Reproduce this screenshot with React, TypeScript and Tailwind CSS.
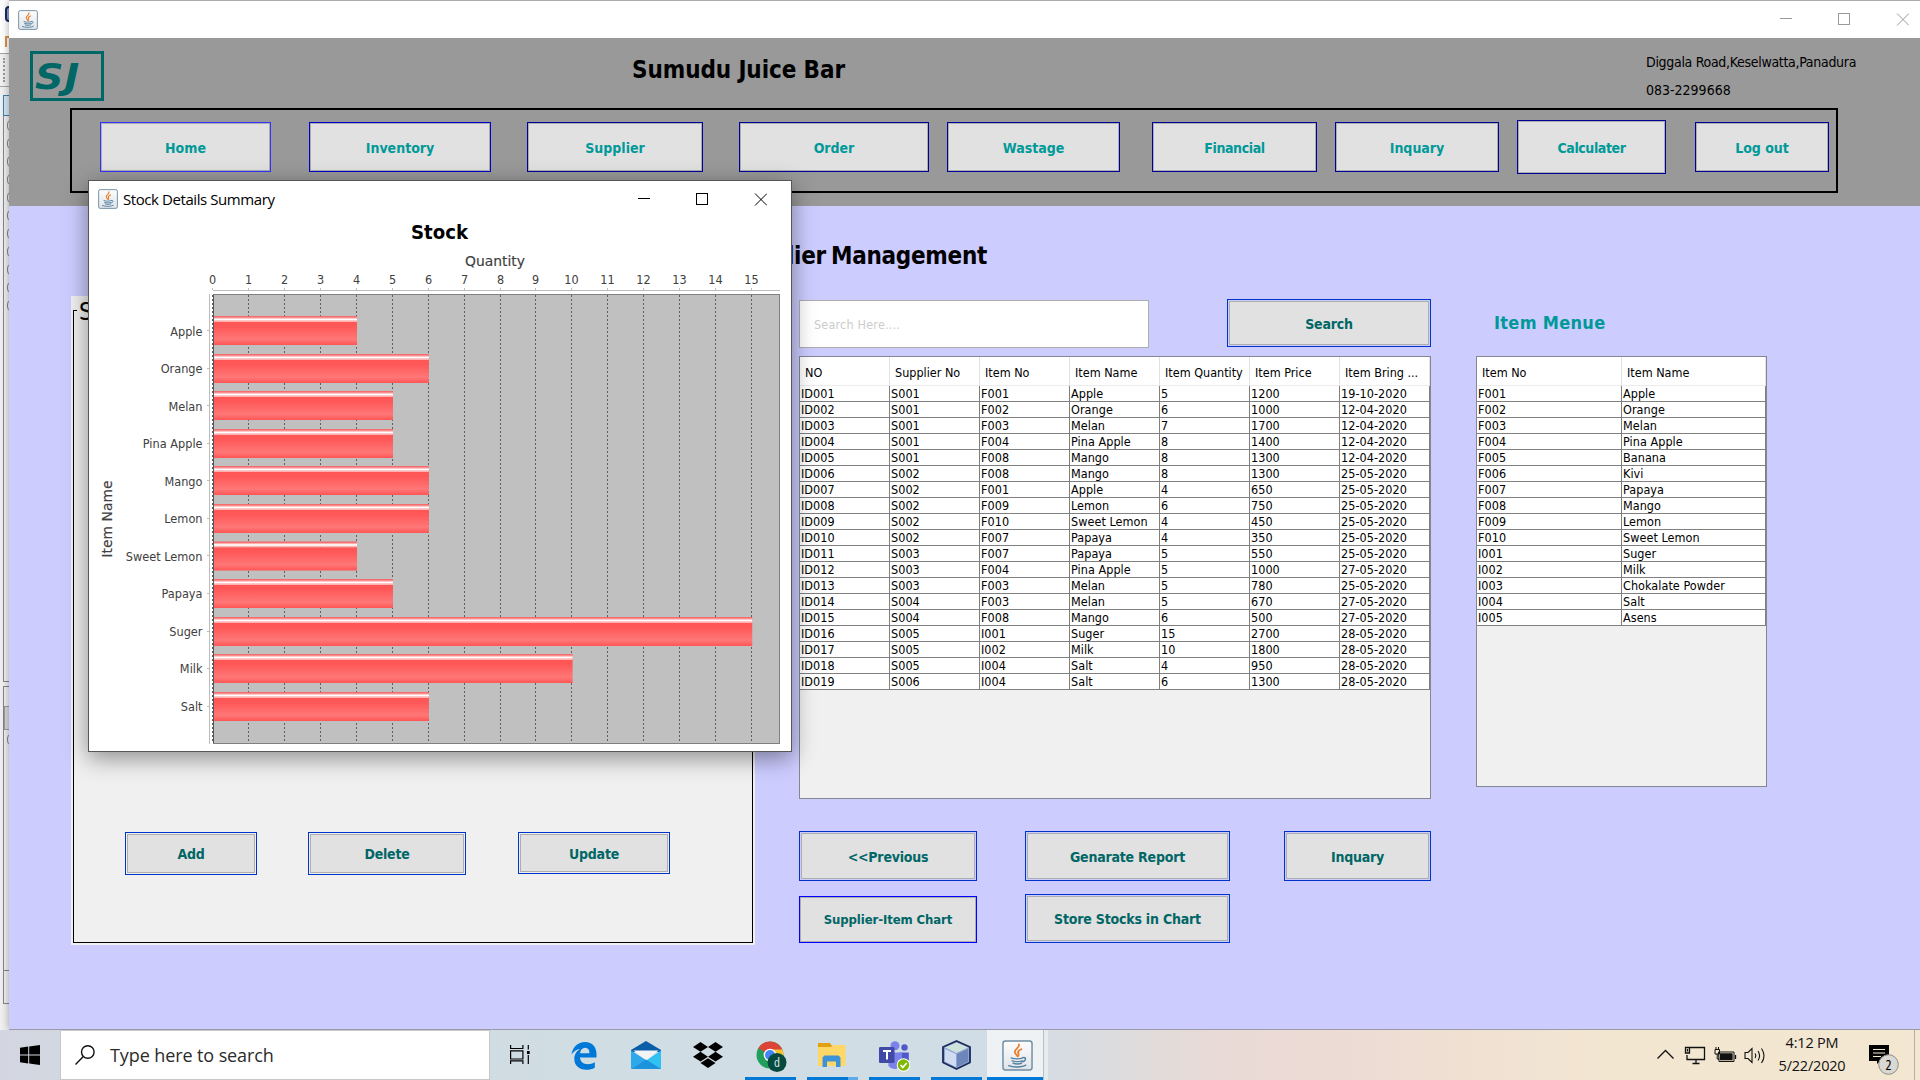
import React from "react";

const TAHOMA = "font-['DejaVu_Sans_Condensed','DejaVu_Sans',sans-serif] [font-stretch:condensed]";
const SEGOE = "font-['Open_Sans','Noto_Sans',sans-serif] [font-stretch:normal]";

function JavaIcon({ className }: { className: string }) {
  return (
    <svg viewBox="0 0 32 32" className={className}>
      <defs>
        <linearGradient id="javaBg" x1="0" y1="0" x2="0" y2="1">
          <stop offset="0" stopColor="#fdfdfd" />
          <stop offset="1" stopColor="#dfe3e8" />
        </linearGradient>
      </defs>
      <rect x="1" y="1" width="30" height="30" rx="2.5" fill="url(#javaBg)" stroke="#6f8da3" strokeWidth="1.5" />
      <path d="M17.5 4.5c1.2 3-4.300 4.600-4.300 7.600 0 2 1.800 3 2.800 4.700M20 9.500c-2.800 1.200-4 2.600-3.200 4.200.8 1.400.4 2.200-.5 3.200" fill="none" stroke="#ec7a26" strokeWidth="1.800" strokeLinecap="round" />
      <path d="M9.500 18.500c3 1.300 9 1.300 12 0M10.500 21.500c3 1 8 1 10 0M11.500 24c2.500.8 6.500.8 8.500 0M21.500 18.200c3.500-.8 4 2.800-.5 4.300M7 26.500c4 1.800 14 1.800 17.500-.5" fill="none" stroke="#5382a1" strokeWidth="1.500" strokeLinecap="round" />
    </svg>
  );
}

function WindowControls({ className }: { className: string }) {
  return (
    <svg viewBox="0 0 129 13" className={className} fill="none" stroke="currentColor" shapeRendering="crispEdges">
      <path d="M0 5.500h12" />
      <rect x="58.500" y="0.500" width="11" height="11" />
      <path d="M117 0.500l12 12M129 0.500l-12 12" shapeRendering="auto" />
    </svg>
  );
}

function NavButton({ label, className }: { label: string; className: string }) {
  return (
    <button className={`shrink-0 border ${className}`}>
      <span className="flex h-full items-center justify-center border border-[#adadad] bg-[#e1e1e1] pt-[2px] text-[14px] font-bold whitespace-nowrap text-[#009999]">
        {label}
      </span>
    </button>
  );
}

function ActionButton({ label, className, textClass = "pt-[2px] text-[14px] tracking-[-0.2px]" }: { label: string; className: string; textClass?: string }) {
  return (
    <button className={`shrink-0 border ${className}`}>
      <span className={`flex h-full items-center justify-center border border-[#adadad] bg-[#e1e1e1] font-bold whitespace-nowrap text-[#006666] ${textClass}`}>
        {label}
      </span>
    </button>
  );
}

const stock = [
  ["ID001", "S001", "F001", "Apple", "5", "1200", "19-10-2020"],
  ["ID002", "S001", "F002", "Orange", "6", "1000", "12-04-2020"],
  ["ID003", "S001", "F003", "Melan", "7", "1700", "12-04-2020"],
  ["ID004", "S001", "F004", "Pina Apple", "8", "1400", "12-04-2020"],
  ["ID005", "S001", "F008", "Mango", "8", "1300", "12-04-2020"],
  ["ID006", "S002", "F008", "Mango", "8", "1300", "25-05-2020"],
  ["ID007", "S002", "F001", "Apple", "4", "650", "25-05-2020"],
  ["ID008", "S002", "F009", "Lemon", "6", "750", "25-05-2020"],
  ["ID009", "S002", "F010", "Sweet Lemon", "4", "450", "25-05-2020"],
  ["ID010", "S002", "F007", "Papaya", "4", "350", "25-05-2020"],
  ["ID011", "S003", "F007", "Papaya", "5", "550", "25-05-2020"],
  ["ID012", "S003", "F004", "Pina Apple", "5", "1000", "27-05-2020"],
  ["ID013", "S003", "F003", "Melan", "5", "780", "25-05-2020"],
  ["ID014", "S004", "F003", "Melan", "5", "670", "27-05-2020"],
  ["ID015", "S004", "F008", "Mango", "6", "500", "27-05-2020"],
  ["ID016", "S005", "I001", "Suger", "15", "2700", "28-05-2020"],
  ["ID017", "S005", "I002", "Milk", "10", "1800", "28-05-2020"],
  ["ID018", "S005", "I004", "Salt", "4", "950", "28-05-2020"],
  ["ID019", "S006", "I004", "Salt", "6", "1300", "28-05-2020"],
];

const menu = [
  ["F001", "Apple"],
  ["F002", "Orange"],
  ["F003", "Melan"],
  ["F004", "Pina Apple"],
  ["F005", "Banana"],
  ["F006", "Kivi"],
  ["F007", "Papaya"],
  ["F008", "Mango"],
  ["F009", "Lemon"],
  ["F010", "Sweet Lemon"],
  ["I001", "Suger"],
  ["I002", "Milk"],
  ["I003", "Chokalate Powder"],
  ["I004", "Salt"],
  ["I005", "Asens"],
];

function Table({ head, rows, cols, className }: { head: string[]; rows: string[][]; cols: string; className: string }) {
  return (
    <div className={`border border-[#828790] bg-[#f0f0f0] text-[12.5px] text-black ${className}`}>
      <div className={`grid h-[29px] border-b border-[#ececec] bg-white ${cols}`}>
        {head.map((h) => (
          <div key={h} className="border-r border-[#e2e2e2] pl-[5px] text-[12.5px] leading-[31px] whitespace-nowrap">
            {h}
          </div>
        ))}
      </div>
      {rows.map((r) => (
        <div key={r[0]} className={`grid h-4 bg-white ${cols}`}>
          {r.map((c, i) => (
            <div key={i} className="h-4 border-r border-b border-[#808080] pl-px leading-[15px] tracking-[0.05px] whitespace-nowrap">
              {c}
            </div>
          ))}
        </div>
      ))}
    </div>
  );
}

const bars: [string, number, number][] = [
  ["Apple", 4, 316],
  ["Orange", 6, 354],
  ["Melan", 5, 391],
  ["Pina Apple", 5, 429],
  ["Mango", 6, 466],
  ["Lemon", 6, 504],
  ["Sweet Lemon", 4, 541.5],
  ["Papaya", 5, 579],
  ["Suger", 15, 617],
  ["Milk", 10, 654],
  ["Salt", 6, 692],
];

const tick = (n: number) => Math.floor(212.6 + n * 35.93) + 0.5;

function StockChart() {
  return (
    <svg viewBox="89 217 702 534" className="block h-[534px] w-[702px]" fill="#404040">
      <defs>
        <linearGradient id="bar" x1="0" y1="0" x2="0" y2="1">
          <stop offset="0" stopColor="#ff5555" />
          <stop offset="0.2" stopColor="#ff5858" />
          <stop offset="0.75" stopColor="#ff7777" />
          <stop offset="1" stopColor="#ff5555" />
        </linearGradient>
      </defs>
      <text x="411" y="239" fontSize="20" fontWeight="bold" fill="#000" textLength="57" lengthAdjust="spacingAndGlyphs">Stock</text>
      <text x="465" y="266" fontSize="14.500" stroke="#404040" strokeWidth="0.150" textLength="60" lengthAdjust="spacingAndGlyphs">Quantity</text>
      <text transform="translate(112 557.500) rotate(-90)" fontSize="14.500" stroke="#404040" strokeWidth="0.150" textLength="77" lengthAdjust="spacingAndGlyphs">Item Name</text>

      <rect x="213" y="294" width="567" height="450" fill="#808080" />
      <rect x="214" y="295" width="565" height="448" fill="#c0c0c0" />
      <path d="M213 290.500H780M209.500 294V744" stroke="#bdbdbd" />
      {Array.from({ length: 16 }, (_, n) => (
        <g key={n}>
          <text x={tick(n)} y="284" fontSize="12.500" textAnchor="middle">{n}</text>
          <path d={`M${tick(n)} 288V290`} stroke="#bdbdbd" />
          <path d={`M${tick(n)} 295V743`} stroke="#606060" strokeDasharray="2 2" />
        </g>
      ))}
      {bars.map(([name, v, y], i) => (
        <g key={name}>
          <text x="202.500" y={Math.floor(336 + i * 37.5)} fontSize="12.600" textAnchor="end">{name}</text>
          <path d={`M207 ${Math.floor(y) + 14.5}H209`} stroke="#bdbdbd" />
          <rect x="213" y={y} width={v * 35.93 + 0.3} height="6" fill="#f46c6c" />
          <rect x="213" y={y + 1.5} width={v * 35.93 + 0.3} height="4.500" fill="#ffb0b0" />
          <rect x="213" y={y + 2.7} width={v * 35.93 + 0.3} height="1.600" fill="#fff" />
          <rect x="213" y={y + 6} width={v * 35.93 + 0.3} height="23" fill="url(#bar)" />
        </g>
      ))}
      <path d="M213.500 295V743" stroke="#555" />
    </svg>
  );
}

function StockWindow() {
  return (
    <div className="absolute top-[180px] left-[88px] flex h-[572px] w-[704px] flex-col border border-[#565656] bg-white shadow-[0_6px_22px_rgba(0,0,0,0.42)]">
      <div className="flex h-9 shrink-0 items-center pl-[9px]">
        <JavaIcon className="h-5 w-5" />
        <span className={`ml-[5px] text-[15px] tracking-[-0.42px] whitespace-nowrap text-black ${SEGOE}`}>Stock Details Summary</span>
        <WindowControls className="mr-6 ml-auto h-[13px] w-[129px] text-black" />
      </div>
      <StockChart />
    </div>
  );
}

function Header() {
  return (
    <header className="h-[168px] shrink-0 bg-[#999999]">
      <div className="flex h-[70px] items-start">
        <div className="mt-[13px] ml-[21px] flex h-[50px] w-[74px] items-center border-[3px] border-[#006666] pt-[2px] pl-[2px] text-[36px] leading-none font-bold text-[#006666] italic [font-stretch:normal] font-['DejaVu_Sans',sans-serif]">
          <span className="origin-left scale-x-110 tracking-[1px]">SJ</span>
        </div>
        <h1 className="mt-[17px] ml-[528px] w-[214px] text-[24px] leading-[30px] font-bold tracking-[-0.1px] whitespace-nowrap text-black">Sumudu Juice Bar</h1>
        <div className="mt-[10px] ml-[800px] text-[14px] leading-7 tracking-[-0.3px] whitespace-nowrap text-black">
          <p>Diggala Road,Keselwatta,Panadura</p>
          <p className="tracking-normal">083-2299668</p>
        </div>
      </div>
      <nav className="ml-[61px] flex h-[85px] w-[1768px] items-start border-2 border-black pt-3 pl-7">
        <NavButton label="Home" className="h-[50px] w-[171px] border-[#3333ff]" />
        <NavButton label="Inventory" className="ml-[38px] h-[50px] w-[182px] border-[#0000cc]" />
        <NavButton label="Supplier" className="ml-9 h-[50px] w-[176px] border-[#000099]" />
        <NavButton label="Order" className="ml-9 h-[50px] w-[190px] border-[#000099]" />
        <NavButton label="Wastage" className="ml-[18px] h-[50px] w-[173px] border-[#000099]" />
        <NavButton label="Financial" className="ml-8 h-[50px] w-[165px] border-[#000099] tracking-[-0.4px]" />
        <NavButton label="Inquary" className="ml-[18px] h-[50px] w-[164px] border-[#000099]" />
        <NavButton label="Calculater" className="-mt-[2px] ml-[18px] h-[54px] w-[149px] border-[#000099] tracking-[-0.4px]" />
        <NavButton label="Log out" className="ml-[29px] h-[50px] w-[134px] border-[#000099]" />
      </nav>
    </header>
  );
}

function MainWindow() {
  return (
    <div className="absolute top-0 left-[9px] flex h-[1030px] w-[1911px] flex-col border-t border-b border-t-[#ababab] border-b-[#9a9aa8] bg-[#ccccff] shadow-[0_0_8px_rgba(0,0,0,0.35)]">
      <div className="flex h-[37px] shrink-0 items-center bg-white pl-[9px]">
        <JavaIcon className="h-5 w-5" />
        <WindowControls className="mr-[11px] ml-auto h-[13px] w-[129px] text-[#999]" />
      </div>
      <Header />
      <div className="flex items-start">
        <section className="mt-[90px] ml-[62px] h-[649px] w-[684px] bg-[#f0f0f0] pt-[14px] pl-[2px]">
          <div className="h-[633px] w-[680px] border border-black">
            <span className="-mt-[14px] ml-[3px] block w-10 bg-[#f0f0f0] pl-[2px] text-[24px] leading-[30px] text-black">S</span>
            <div className="mt-[505px] ml-[51px] flex items-start">
              <ActionButton label="Add" className="h-[43px] w-[132px] border-[#0033cc] p-px" />
              <ActionButton label="Delete" className="ml-[51px] h-[43px] w-[158px] border-[#0033cc] p-px" />
              <ActionButton label="Update" className="ml-[52px] h-[42px] w-[152px] border-[#0033cc] p-px" />
            </div>
          </div>
        </section>
        <section className="ml-11 w-[632px]">
          <h2 className="flex h-[93px] w-[188px] justify-end pt-[35px] text-[24px] leading-[30px] font-bold tracking-[-0.3px] whitespace-nowrap text-black [word-spacing:-2px]">Supplier Management</h2>
          <div className="flex h-[49px] items-start">
            <div className="mt-px flex h-12 w-[350px] items-center border border-[#adadad] bg-white pt-[2px] pl-[14px] text-[12.5px] tracking-[0.2px] text-[#cccccc]">Search Here....</div>
            <ActionButton label="Search" className="ml-[78px] h-12 w-[204px] border-[#0033cc] p-px" />
          </div>
          <Table
            className="mt-2 h-[443px]"
            cols="grid-cols-[repeat(7,90px)]"
            head={["NO", "Supplier No", "Item No", "Item Name", "Item Quantity", "Item Price", "Item Bring ..."]}
            rows={stock}
          />
          <div className="mt-8 flex">
            <ActionButton label="<<Previous" className="h-[50px] w-[178px] border-[#0033cc] p-px" />
            <ActionButton label="Genarate Report" className="ml-12 h-[50px] w-[205px] border-[#0033cc] p-px" />
            <ActionButton label="Inquary" className="ml-[54px] h-[50px] w-[147px] border-[#0033cc] p-px" />
          </div>
          <div className="mt-[13px] flex items-end">
            <ActionButton label="Supplier-Item Chart" textClass="text-[13px] tracking-[-0.1px]" className="h-[47px] w-[178px] border-[#0000ff]" />
            <ActionButton label="Store Stocks in Chart" className="ml-12 h-[49px] w-[205px] border-[#0033cc] p-px" />
          </div>
        </section>
        <section className="ml-[45px] w-[291px]">
          <h3 className="h-[150px] pt-[103px] pl-[18px] text-[18px] leading-[28px] font-bold tracking-[0.3px] text-[#009999]">Item Menue</h3>
          <Table className="h-[431px]" cols="grid-cols-[145px_144px]" head={["Item No", "Item Name"]} rows={menu} />
        </section>
      </div>
    </div>
  );
}

/* Sliver of the IDE window that shows at the left of the application window. */
function BackgroundWindow() {
  return (
    <div className="absolute top-0 left-0 h-[1030px] w-3 overflow-hidden bg-[#f0f0f0]">
      <div className="h-[53px] bg-white pt-[6px]">
        <div className="ml-[5px] h-4 w-4 rounded border-2 border-[#1b2a63] bg-[#8ba0cc]" />
        <div className="mt-[14px] ml-[5px] h-[11px] w-[6px] border-t-2 border-l-2 border-[#d8944a]" />
      </div>
      <div className="h-[34px] border-t border-b border-[#a5a5a5]">
        <div className="mt-1 ml-[3px] h-6 w-0.5 border-l-2 border-dotted border-[#999]" />
      </div>
      <div className="mt-2 ml-[3px] h-[21px] border border-r-0 border-[#3c7fb1] bg-[#d6e8f6]" />
      <div className="ml-[3px] h-[566px] border-b border-l border-[#828790] pt-1 pl-[3px]">
        {Array.from({ length: 11 }, (_, i) => (
          <div key={i} className="mb-[7px] h-[11px] w-3 rounded-sm border border-[#888]" />
        ))}
      </div>
      <div className="mt-1 ml-[3px] h-[318px] border-t border-b border-l border-[#828790] pt-[19px]">
        <div className="h-6 border border-[#9a9aa0] bg-[#d9d9d9]" />
        <div className="mt-1 ml-[3px] h-[11px] w-3 rounded-sm border border-[#888]" />
        <div className="mt-[225px] h-px bg-[#828790]" />
      </div>
    </div>
  );
}

function Slot({ children, className = "" }: { children: React.ReactNode; className?: string }) {
  return <div className={`flex h-[50px] shrink-0 flex-col items-center ${className}`}>{children}</div>;
}

function Taskbar() {
  return (
    <div className="absolute top-[1030px] left-0 flex h-[50px] w-full bg-[linear-gradient(90deg,#d3d6e0_0%,#d2dae2_12%,#d0dde3_30%,#d0dde6_52%,#dcdcde_58%,#e8dad6_63%,#ecdad5_68%,#efe0d3_76%,#f3e6d1_84%,#f3e7d2_100%)]">
      <Slot className="w-[60px] pt-[15px]">
        <svg viewBox="0 0 20 20" className="h-5 w-5">
          <path d="M0 2.800L8.200 1.600V9.500H0zM9.200 1.500L20 0V9.500H9.200zM0 10.500H8.200V18.400L0 17.200zM9.200 10.500H20V20L9.200 18.500z" />
        </svg>
      </Slot>
      <div className="flex h-[50px] w-[430px] shrink-0 items-center border border-[#c8c8c8] bg-white pl-[14px]">
        <svg viewBox="0 0 20 20" className="h-5 w-5" fill="none" stroke="#111" strokeWidth="1.400">
          <circle cx="12.800" cy="7" r="6.300" />
          <path d="M8.300 11.500L0.500 19.500" />
        </svg>
        <span className={`ml-[15px] text-[18px] tracking-[-0.1px] whitespace-nowrap text-[#2b2b2b] ${SEGOE}`}>Type here to search</span>
      </div>
      <Slot className="ml-5 w-5 pt-[15px]">
        <svg viewBox="0 0 20 20" className="h-5 w-5" fill="none" stroke="#000" strokeWidth="1.200">
          <path d="M0.600 0V3.500H12.900V0M0.600 5.800H12.900V14H0.600zM0.600 19V15.800H12.900V19M18.300 0V4.500M18.300 10V19" />
          <rect x="17" y="6" width="2.700" height="3" fill="#000" stroke="none" />
        </svg>
      </Slot>
      <Slot className="ml-[41px] w-[26px] pt-3">
        <svg viewBox="0 0 26 28" className="h-7 w-[26px]">
          <path d="M0.500 12.500C1.500 5 7 0 14 0c7.500 0 11.500 5.500 11.500 12v3.500H9c.2 4.300 3.400 6.700 7.800 6.700 2.600 0 5-.8 7-2v5.500c-2.500 1.400-5.200 2.100-8.500 2.100C8.200 27.800 3.300 23.500 3.300 17c0-4.300 2.200-8 6-10.200C5.500 7.400 2.500 9.500 0.500 12.500zM9 11.200h9.500c0-3.400-1.500-5.500-4.400-5.500-2.800 0-4.600 2.300-5.100 5.500z" fill="#0078d7" />
        </svg>
      </Slot>
      <Slot className="ml-[34px] w-[30px] pt-[11px]">
        <svg viewBox="0 0 30 28" className="h-7 w-[30px]">
          <path d="M0 9L15 0l15 9v2H0z" fill="#0a5ea8" />
          <path d="M2.500 9.500h25L15 20z" fill="#f4f4f6" />
          <path d="M0 9.500l15 9.500L0 28z" fill="#2da8e8" />
          <path d="M30 9.500V28H0l16-9z" fill="#31c0f2" />
          <path d="M15 18.500L30 28H0z" fill="#1c93dc" />
        </svg>
      </Slot>
      <Slot className="ml-8 w-[30px] pt-3">
        <svg viewBox="0 0 30 26" className="h-[26px] w-[30px]">
          <path d="M7.500 0L15 4.900 7.500 9.800 0 4.900zM22.500 0L30 4.900l-7.500 4.900L15 4.900zM0 14.700l7.500-4.900 7.500 4.900-7.500 4.900zM22.500 9.800l7.500 4.900-7.500 4.900-7.500-4.900zM7.500 21.100l7.500-4.900 7.500 4.900L15 26z" />
        </svg>
      </Slot>
      <Slot className="ml-[22px] w-[51px] justify-between pt-[11px]">
        <svg viewBox="0 0 31 31" className="ml-[2px] h-[31px] w-[31px]">
          <circle cx="14" cy="14" r="13.500" fill="#22a05b" />
          <path d="M14 14L2.300 7.200A13.500 13.500 0 0 1 25.700 7.200L26 9H14z" fill="#dc4437" />
          <path d="M14 8.500H26.300A13.500 13.500 0 0 1 15 27.500l5-9z" fill="#f9c22e" />
          <circle cx="14" cy="14" r="6.300" fill="#fff" />
          <circle cx="14" cy="14" r="5" fill="#4285f4" />
          <circle cx="21" cy="21.500" r="9.500" fill="#06493f" />
          <text x="21" y="26" fontSize="13" textAnchor="middle" fill="#d9e6e3" fontFamily="Open Sans, sans-serif">d</text>
        </svg>
        <div className="h-[3px] w-full bg-[#0078d7]" />
      </Slot>
      <Slot className="ml-[11px] w-[51px] justify-between pt-[13px]">
        <svg viewBox="0 0 28 24" className="mr-px h-6 w-7">
          <path d="M0 0h12l2 3v4H0z" fill="#e0a010" />
          <path d="M0 4h13l2-2h12.500v21H0z" fill="#ffd766" />
          <path d="M4.500 24v-9.500l2-2h14l2 2V24H18v-5.500H9V24z" fill="#3d93d6" />
        </svg>
        <div className="flex h-[3px] w-full">
          <div className="w-[41px] bg-[#0078d7]" />
          <div className="w-[10px] bg-[#5fabe8]" />
        </div>
      </Slot>
      <Slot className="ml-[11px] w-[51px] justify-between pt-[11px]">
        <svg viewBox="0 0 31 31" className="h-[31px] w-[31px]">
          <circle cx="25.500" cy="6.500" r="3.200" fill="#5059c9" />
          <circle cx="16" cy="4.800" r="4.500" fill="#7b83eb" />
          <path d="M20 11.500h9.800v8c0 3.500-2.300 5.500-5 5.500z" fill="#5059c9" />
          <path d="M9 11.500h14v9.500a7.500 7.500 0 0 1-13.500 4z" fill="#7b83eb" />
          <rect x="0" y="6" width="15.500" height="16" rx="1.200" fill="#4048a8" />
          <path d="M4 10h8M8 10v8.500" stroke="#fff" strokeWidth="2" />
          <circle cx="24.500" cy="24" r="6.800" fill="#fff" />
          <circle cx="24.500" cy="24" r="5.800" fill="#7fba00" />
          <path d="M21.500 24l2.300 2.400 4-4.400" fill="none" stroke="#fff" strokeWidth="1.700" />
        </svg>
        <div className="h-[3px] w-full bg-[#0078d7]" />
      </Slot>
      <Slot className="ml-[11px] w-[51px] justify-between pt-[10px]">
        <svg viewBox="0 0 29 30" className="mr-px h-[30px] w-[29px]">
          <path d="M14.500 1L28 7v15.500L14.500 29 1 22.500V7z" fill="#8ea6cf" stroke="#1c2a5c" strokeWidth="1.800" strokeLinejoin="round" />
          <path d="M3 7.500l11.500-5L26 7.500 14.500 13z" fill="#cfe3dc" />
          <path d="M3 9l11 5v13L3 21.500z" fill="#cfdcf2" />
          <path d="M15 14l11-5v12.500L15 27z" fill="#6d86bb" />
        </svg>
        <div className="h-[3px] w-full bg-[#0078d7]" />
      </Slot>
      <Slot className="ml-[5px] w-[56px] justify-between bg-[#eff2f4] pt-[10px]">
        <JavaIcon className="ml-1 h-[31px] w-[31px]" />
        <div className="h-[3px] w-full bg-[#0078d7]" />
      </Slot>
      <div className="h-[50px] w-[5px] border-l border-[#b8c0c4] bg-[#e6ebee]" />
      <div className="mr-[5px] ml-auto flex h-[50px] border-r border-[#b5afa3]">
        <svg viewBox="0 0 110 20" className="mt-4 h-5 w-[110px]" fill="none" stroke="#111" strokeWidth="1.300">
          <path d="M0.500 12.500L8.500 4.500l8 8" />
          <path d="M32.500 1.500h15v12H30V9M35.500 17.500h7M39 13.500v4M28.500 1.500h4V7h-4zM30.500 3v2.500" />
          <path d="M61.500 6h15.500v9.500H62zM58 3.500h4.500V8H58zM59 1v2.500M61.500 1v2.500M60.200 8v5h2" strokeWidth="1" />
          <path d="M63.500 8h11.500V13.500H63.500z" fill="#111" />
          <path d="M78.500 9v4" />
          <path d="M88 6.500h3l4-4v14l-4-4h-3zM98 7.500q1.500 2.200 0 4.500M101 5q3.200 4.700 0 9.500M104.500 2.500q5 7.200 0 14.500" strokeWidth="1.100" />
        </svg>
        <div className={`ml-[10px] w-[70px] pt-px text-center text-[14.5px] leading-[23px] tracking-[-0.2px] whitespace-nowrap text-[#111] ${SEGOE}`}>
          <p>4:12 PM</p>
          <p>5/22/2020</p>
        </div>
        <svg viewBox="0 0 32 32" className="mt-[14px] mr-[13px] ml-[22px] h-8 w-8">
          <path d="M0 1h20v16h-9l-3 3v-3H0z" />
          <path d="M4 5.500h12M4 9h12M4 12.500h8" stroke="#f3e7d2" strokeWidth="1.100" />
          <circle cx="19.500" cy="20.500" r="9.800" fill="#dad8d2" stroke="#8f8d88" />
          <text x="19.500" y="25.500" fontSize="14" textAnchor="middle" fontFamily="Open Sans, sans-serif" fill="#000">2</text>
        </svg>
      </div>
    </div>
  );
}

export default function App() {
  return (
    <div className={`relative h-[1080px] w-[1920px] overflow-hidden bg-[#f0f0f0] ${TAHOMA}`}>
      <BackgroundWindow />
      <MainWindow />
      <StockWindow />
      <Taskbar />
    </div>
  );
}
